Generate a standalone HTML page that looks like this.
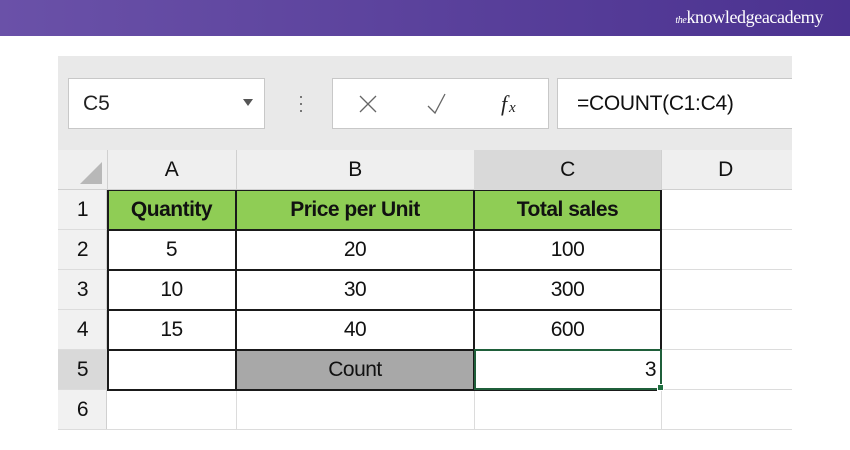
<!DOCTYPE html>
<html><head><style>
*{margin:0;padding:0;box-sizing:border-box}
body{width:850px;height:450px;background:#fff;position:relative;overflow:hidden;font-family:"Liberation Sans",sans-serif}
.hdr{position:absolute;left:0;top:0;width:850px;height:36px;background:linear-gradient(90deg,#6a51a8,#4b3290)}
.logo{position:absolute;right:27px;top:7px;color:#fff;font-family:"Liberation Serif",serif;font-size:18px;letter-spacing:-0.4px}
.logo i{font-size:10px}
.a{position:absolute}
.c{position:absolute;display:flex;align-items:center;justify-content:center;font-size:21px;color:#111;letter-spacing:-0.5px}
</style></head><body>
<div class="hdr"><div class="logo"><i>the</i>knowledgeacademy</div></div>
<div class="a" style="left:58px;top:56px;width:734px;height:96px;background:#e9e9e9"></div>
<div class="a" style="left:68px;top:78px;width:197px;height:51px;background:#fff;border:1px solid #c8c8c8"></div>
<div class="a" style="left:83px;top:92px;font-size:21px;color:#222">C5</div>
<div class="a" style="left:243px;top:99px;width:0;height:0;border-left:5px solid transparent;border-right:5px solid transparent;border-top:7px solid #555"></div>
<div class="a" style="left:300px;top:96px;width:2px;height:2px;background:#777;box-shadow:0 7px 0 #777,0 14px 0 #777"></div>
<div class="a" style="left:332px;top:78px;width:217px;height:51px;background:#fff;border:1px solid #c8c8c8"></div>
<svg class="a" style="left:355px;top:92px" width="170" height="26"><path d="M5 4L21 20M21 4L5 20" stroke="#666" stroke-width="1.3"/><path d="M73 14L80 21L90 2" stroke="#666" stroke-width="1.3" fill="none"/><text x="146" y="19" font-family="Liberation Serif" font-style="italic" font-size="22" fill="#222">f</text><text x="154" y="20" font-family="Liberation Serif" font-style="italic" font-size="15" fill="#222">x</text></svg>
<div class="a" style="left:557px;top:78px;width:240px;height:51px;background:#fff;border:1px solid #c8c8c8"></div>
<div class="a" style="left:577px;top:92px;font-size:21px;color:#111;letter-spacing:-0.3px">=COUNT(C1:C4)</div>
<div class="a" style="left:792px;top:56px;width:58px;height:394px;background:#fff"></div>

<div class="a" style="left:58px;top:150px;width:734px;height:280px;background:#fff"></div>
<div class="a" style="left:58px;top:150px;width:734px;height:40px;background:#efefef;border-bottom:1px solid #d0d0d0"></div>
<div class="a" style="left:474px;top:150px;width:187px;height:40px;background:#d9d9d9"></div>
<svg class="a" style="left:78px;top:160px" width="26" height="26"><path d="M24 2L24 24L2 24Z" fill="#b8b8b8"/></svg>
<div class="c" style="left:107px;top:150px;width:129px;height:40px">A</div>
<div class="c" style="left:236px;top:150px;width:238px;height:40px">B</div>
<div class="c" style="left:474px;top:150px;width:187px;height:40px">C</div>
<div class="c" style="left:661px;top:150px;width:129px;height:40px">D</div>
<div class="a" style="left:107px;top:150px;width:1px;height:40px;background:#d0d0d0"></div>
<div class="a" style="left:236px;top:150px;width:1px;height:40px;background:#d0d0d0"></div>
<div class="a" style="left:661px;top:150px;width:1px;height:40px;background:#d0d0d0"></div>
<div class="a" style="left:58px;top:190px;width:49px;height:240px;background:#f1f1f1;border-right:1px solid #d0d0d0"></div>
<div class="a" style="left:58px;top:350px;width:49px;height:40px;background:#d9d9d9"></div>
<div class="c" style="left:58px;top:190px;width:49px;height:40px">1</div>
<div class="c" style="left:58px;top:230px;width:49px;height:40px">2</div>
<div class="c" style="left:58px;top:270px;width:49px;height:40px">3</div>
<div class="c" style="left:58px;top:310px;width:49px;height:40px">4</div>
<div class="c" style="left:58px;top:350px;width:49px;height:40px">5</div>
<div class="c" style="left:58px;top:390px;width:49px;height:40px">6</div>
<div class="a" style="left:58px;top:229px;width:734px;height:1px;background:#dcdcdc"></div>
<div class="a" style="left:58px;top:269px;width:734px;height:1px;background:#dcdcdc"></div>
<div class="a" style="left:58px;top:309px;width:734px;height:1px;background:#dcdcdc"></div>
<div class="a" style="left:58px;top:349px;width:734px;height:1px;background:#dcdcdc"></div>
<div class="a" style="left:58px;top:389px;width:734px;height:1px;background:#dcdcdc"></div>
<div class="a" style="left:58px;top:429px;width:734px;height:1px;background:#dcdcdc"></div>
<div class="a" style="left:236px;top:390px;width:1px;height:40px;background:#dcdcdc"></div>
<div class="a" style="left:474px;top:390px;width:1px;height:40px;background:#dcdcdc"></div>
<div class="a" style="left:661px;top:190px;width:1px;height:240px;background:#dcdcdc"></div>
<div class="a" style="left:107px;top:190px;width:554px;height:40px;background:#8fcd55"></div>
<div class="a" style="left:236px;top:350px;width:238px;height:40px;background:#a8a8a8"></div>
<div class="a" style="left:107px;top:190px;width:555px;height:201px;border:2px solid #1a1a1a;border-top:1px solid #1a1a1a"></div>
<div class="a" style="left:107px;top:229px;width:555px;height:2px;background:#1a1a1a"></div>
<div class="a" style="left:107px;top:269px;width:555px;height:2px;background:#1a1a1a"></div>
<div class="a" style="left:107px;top:309px;width:555px;height:2px;background:#1a1a1a"></div>
<div class="a" style="left:107px;top:349px;width:555px;height:2px;background:#1a1a1a"></div>
<div class="a" style="left:235px;top:190px;width:2px;height:200px;background:#1a1a1a"></div>
<div class="a" style="left:473px;top:190px;width:2px;height:200px;background:#1a1a1a"></div>
<div class="a" style="left:474px;top:349px;width:188px;height:41px;border:2px solid #1f5f3a"></div>
<div class="a" style="left:657px;top:384px;width:7px;height:7px;background:#1f6f40;border:1px solid #fff"></div>
<div class="c" style="left:107px;top:190px;width:129px;height:40px;font-weight:bold">Quantity</div>
<div class="c" style="left:236px;top:190px;width:238px;height:40px;font-weight:bold">Price per Unit</div>
<div class="c" style="left:474px;top:190px;width:187px;height:40px;font-weight:bold">Total sales</div>
<div class="c" style="left:107px;top:230px;width:129px;height:40px">5</div>
<div class="c" style="left:236px;top:230px;width:238px;height:40px">20</div>
<div class="c" style="left:474px;top:230px;width:187px;height:40px">100</div>
<div class="c" style="left:107px;top:270px;width:129px;height:40px">10</div>
<div class="c" style="left:236px;top:270px;width:238px;height:40px">30</div>
<div class="c" style="left:474px;top:270px;width:187px;height:40px">300</div>
<div class="c" style="left:107px;top:310px;width:129px;height:40px">15</div>
<div class="c" style="left:236px;top:310px;width:238px;height:40px">40</div>
<div class="c" style="left:474px;top:310px;width:187px;height:40px">600</div>
<div class="c" style="left:236px;top:350px;width:238px;height:40px">Count</div>
<div class="c" style="left:474px;top:350px;width:182px;height:40px;justify-content:flex-end">3</div>
</body></html>
